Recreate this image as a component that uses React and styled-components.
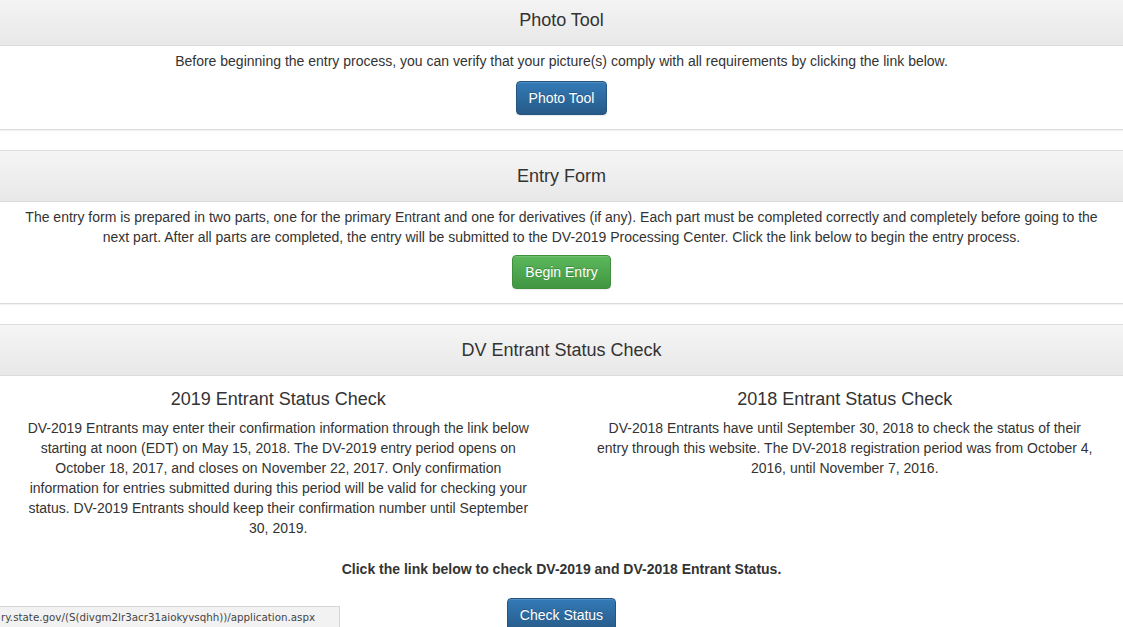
import React from "react";
import styled, { createGlobalStyle, css } from "styled-components";

const Global = createGlobalStyle`
  html, body { margin: 0; padding: 0; background: #fff; }
  body {
    font-family: "Liberation Sans", Arial, sans-serif;
    font-size: 14px;
    line-height: 20px;
    color: #333;
    overflow: hidden;
  }
`;

const Page = styled.div`
  margin-top: -6px;
`;

const Panel = styled.section`
  border-top: 1px solid #dcdcdc;
  border-bottom: 1px solid #dcdcdc;
  box-shadow: 0 1px 1px rgba(0, 0, 0, 0.05);
  margin-bottom: 20px;
  background: #fff;
`;

const Heading = styled.div`
  background: linear-gradient(to bottom, #f5f5f5 0%, #e8e8e8 100%);
  border-bottom: 1px solid #dcdcdc;
  padding: 15px;
  text-align: center;
`;

const Title = styled.h3`
  margin: 0;
  font-size: 18px;
  font-weight: normal;
  line-height: 20px;
  color: #333;
`;

const Body = styled.div`
  padding: 5px 15px 14px;
  text-align: center;
`;

const Text = styled.p`
  margin: 0;
  font-size: 14px;
  line-height: 20px;
  color: #333;
`;

const Button = styled.a`
  display: inline-block;
  margin-top: ${(p) => p.$mt ?? 10}px;
  padding: 6px 12px;
  font-size: 14px;
  line-height: 20px;
  border-radius: 4px;
  color: #fff;
  text-decoration: none;
  text-shadow: 0 -1px 0 rgba(0, 0, 0, 0.2);
  box-shadow: inset 0 1px 0 rgba(255, 255, 255, 0.15), 0 1px 1px rgba(0, 0, 0, 0.075);
  ${(p) =>
    p.$variant === "success"
      ? css`
          background: linear-gradient(to bottom, #5cb85c 0%, #419641 100%);
          border: 1px solid #3e8f3e;
        `
      : css`
          background: linear-gradient(to bottom, #337ab7 0%, #265a88 100%);
          border: 1px solid #245580;
        `}
`;

const Columns = styled.div`
  display: grid;
  grid-template-columns: 1fr 1fr;
  column-gap: 10px;
`;

const Column = styled.div`
  padding: 13px 25px 0;
  text-align: center;
`;

const SubTitle = styled.h4`
  margin: 0 0 9px;
  font-size: 18px;
  font-weight: normal;
  line-height: 20px;
  color: #333;
`;

const Notice = styled.p`
  margin: 22px 0 0;
  font-size: 14px;
  font-weight: bold;
  line-height: 18px;
  color: #333;
  text-align: center;
`;

const Center = styled.div`
  text-align: center;
`;

const StatusBar = styled.div`
  position: fixed;
  left: 0;
  bottom: 0;
  width: 338px;
  height: 20px;
  background: #f2f2f2;
  border-top: 1px solid #d6d6d6;
  border-right: 1px solid #d6d6d6;
  font-family: "DejaVu Sans", "Liberation Sans", sans-serif;
  font-size: 10.3px;
  line-height: 20px;
  color: #444;
  white-space: nowrap;
  overflow: hidden;
  padding-left: 1px;
`;

export default function App() {
  return (
    <>
      <Global />
      <Page>
        <Panel>
          <Heading>
            <Title>Photo Tool</Title>
          </Heading>
          <Body>
            <Text>
              Before beginning the entry process, you can verify that your picture(s) comply with all
              requirements by clicking the link below.
            </Text>
            <Button href="#">Photo Tool</Button>
          </Body>
        </Panel>

        <Panel>
          <Heading>
            <Title>Entry Form</Title>
          </Heading>
          <Body>
            <Text>
              The entry form is prepared in two parts, one for the primary Entrant and one for derivatives
              (if any). Each part must be completed correctly and completely before going to the next part.
              After all parts are completed, the entry will be submitted to the DV-2019 Processing Center.
              Click the link below to begin the entry process.
            </Text>
            <Button href="#" $variant="success" $mt={8}>Begin Entry</Button>
          </Body>
        </Panel>

        <Panel>
          <Heading>
            <Title>DV Entrant Status Check</Title>
          </Heading>
          <Columns>
            <Column>
              <SubTitle>2019 Entrant Status Check</SubTitle>
              <Text>
                DV-2019 Entrants may enter their confirmation information through the link below starting
                at noon (EDT) on May 15, 2018. The DV-2019 entry period opens on October 18, 2017, and
                closes on November 22, 2017. Only confirmation information for entries submitted during
                this period will be valid for checking your status. DV-2019 Entrants should keep their
                confirmation number until September 30, 2019.
              </Text>
            </Column>
            <Column>
              <SubTitle>2018 Entrant Status Check</SubTitle>
              <Text>
                DV-2018 Entrants have until September 30, 2018 to check the status of their entry through
                this website. The DV-2018 registration period was from October 4, 2016, until November 7,
                2016.
              </Text>
            </Column>
          </Columns>
          <Notice>Click the link below to check DV-2019 and DV-2018 Entrant Status.</Notice>
          <Center>
            <Button href="#" $mt={20}>Check Status</Button>
          </Center>
        </Panel>
      </Page>
      <StatusBar>ry.state.gov/(S(divgm2lr3acr31aiokyvsqhh))/application.aspx</StatusBar>
    </>
  );
}
